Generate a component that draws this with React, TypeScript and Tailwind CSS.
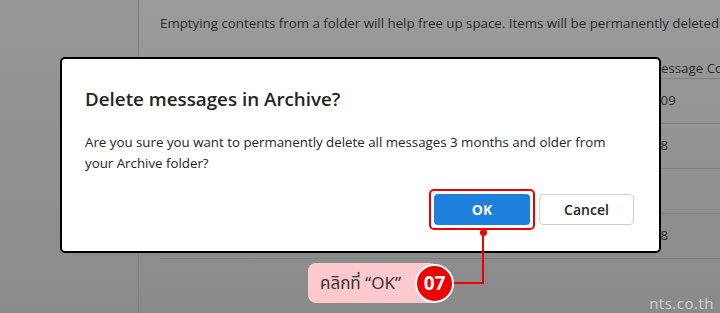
import { } from 'react';

const rows = ['409', '38', '', '38'];

function Backdrop() {
  return (
    <div className="flex h-full w-full bg-gradient-to-b from-[#9b9b9b] to-[#8a8a8a]">
      <div className="h-full w-[139px] shrink-0 border-r border-[#7e7e7e] bg-gradient-to-b from-[#979797] to-[#8b8b8b]" />
      <div className="flex-1 pl-[21px] pt-[13px]">
        <p className="whitespace-nowrap text-[13.3px] leading-[20px] text-[#2b2b2b]">
          Emptying contents from a folder will help free up space. Items will be permanently deleted.
        </p>
        <div className="mt-[23px] flex flex-col">
          <div className="flex h-[23px] items-end border-b border-[#808080] pl-[489px] text-[13.3px] leading-[20px] text-[#2b2b2b]">
            <span className="whitespace-nowrap">Message Count</span>
          </div>
          {rows.map((r, i) => (
            <div
              key={i}
              className="flex h-[45px] items-center border-b border-[#808080] pl-[493px] text-[13.3px] text-[#2b2b2b]"
            >
              {r}
            </div>
          ))}
        </div>
      </div>
    </div>
  );
}

function Dialog() {
  return (
    <div className="absolute left-[60px] top-[57px] flex h-[196px] w-[601px] flex-col rounded-[5px] border-2 border-black bg-white px-[23px] pt-[26px]">
      <h2 className="text-[18.8px] font-semibold leading-[28px] text-[#242424]">Delete messages in Archive?</h2>
      <p className="mt-[19px] w-[540px] text-[13.3px] leading-[21px] text-[#242424]">
        Are you sure you want to permanently delete all messages 3 months and older from your Archive folder?
      </p>
      <div className="mt-[20px] flex justify-end gap-[9px] pr-[2px]">
        <div className="relative">
          <button className="h-[31px] w-[96px] rounded-[4px] bg-[#1e80dc] text-[14px] font-bold text-white">
            OK
          </button>
          <div className="absolute -inset-[5px] rounded-[5px] border-2 border-[#ee0000]" />
        </div>
        <button className="h-[31px] w-[95px] rounded-[4px] border border-[#d1d1d1] bg-white text-[14px] font-semibold text-[#242424]">
          Cancel
        </button>
      </div>
    </div>
  );
}

function Callout() {
  return (
    <>
      <div className="absolute left-[480px] top-[229px] h-[7px] w-[7px] rounded-full bg-[#ee0000]" />
      <div className="absolute left-[482px] top-[232px] h-[52px] w-[2px] bg-[#ee0000]" />
      <div className="absolute left-[452px] top-[282px] h-[2px] w-[32px] bg-[#ee0000]" />
      <div className="absolute left-[308px] top-[263px] flex h-[40px] w-[130px] items-center rounded-[8px] bg-[#ffc9ce] pl-[12px] font-['Noto_Sans','Noto_Sans_Thai',sans-serif] text-[17px] text-[#333]">
        คลิกที่ “OK”
      </div>
      <div className="absolute left-[415px] top-[264px] flex h-[39px] w-[39px] items-center justify-center rounded-full border-2 border-white bg-[#ee0000] text-[19px] font-bold text-white">
        07
      </div>
      <div className="absolute right-[6px] top-[292px] text-[15px] tracking-[0.5px] text-[#cfcfcf]">nts.co.th</div>
    </>
  );
}

export default function App() {
  return (
    <div className="relative h-[313px] w-[720px] overflow-hidden font-['Open_Sans',sans-serif]">
      <Backdrop />
      <Dialog />
      <Callout />
    </div>
  );
}
